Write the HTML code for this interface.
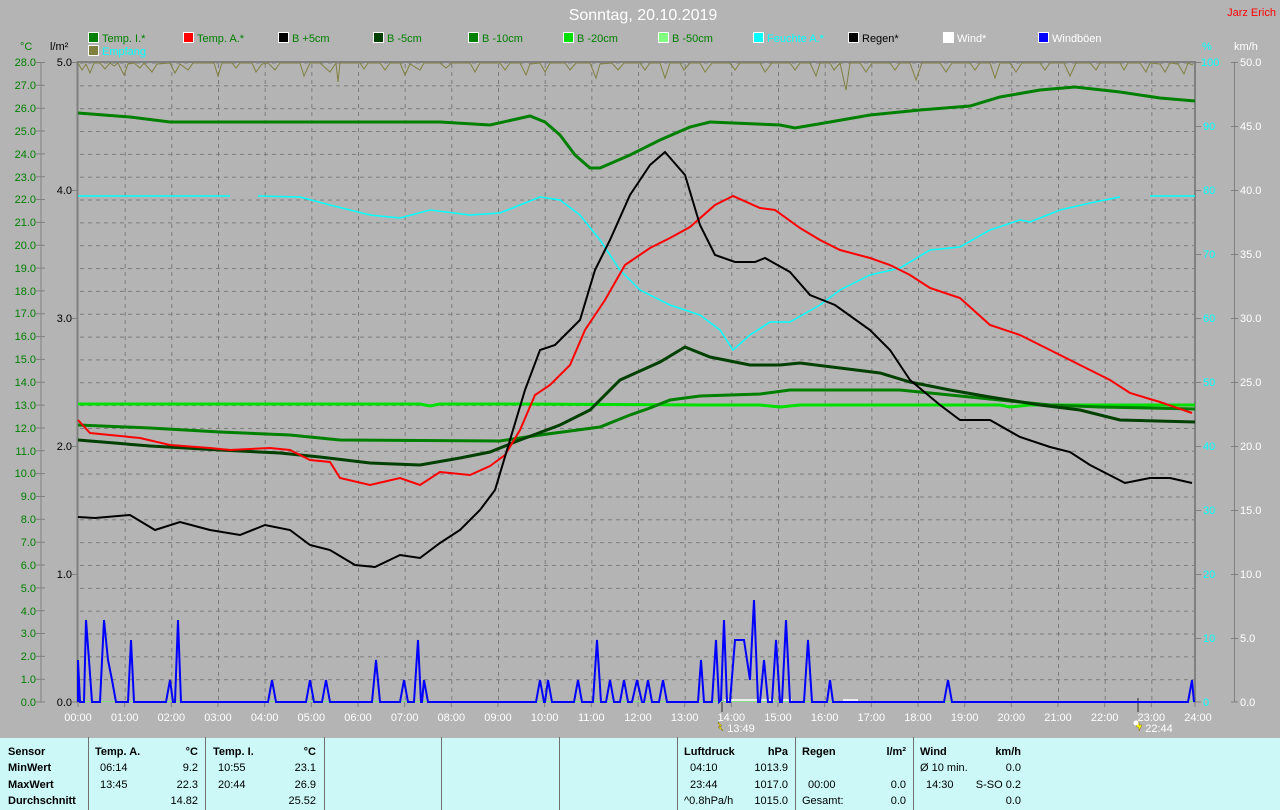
<!DOCTYPE html>
<html><head><meta charset="utf-8"><style>
html,body{margin:0;padding:0;background:#b4b4b4;width:1280px;height:810px;overflow:hidden}
svg{display:block}
.t{font-family:"Liberation Sans",sans-serif;font-size:11px}
</style></head><body>
<svg width="1280" height="810" viewBox="0 0 1280 810" xmlns="http://www.w3.org/2000/svg">
<defs>
<pattern id="gv" x="78" y="0" width="46.667" height="810" patternUnits="userSpaceOnUse"><line x1="0.5" y1="0" x2="0.5" y2="810" stroke="#7c7c7c" stroke-dasharray="4,4"/></pattern>
<pattern id="gh" x="0" y="62.5" width="1280" height="22.84" patternUnits="userSpaceOnUse"><line x1="0" y1="0.5" x2="1280" y2="0.5" stroke="#7c7c7c" stroke-dasharray="4,4"/></pattern>
</defs>
<rect width="1280" height="810" fill="#b4b4b4"/>
<rect x="79" y="63" width="1115" height="639" fill="url(#gv)"/>
<rect x="79" y="63" width="1115" height="639" fill="url(#gh)"/>
<!-- plot frame -->
<line x1="77.5" y1="61" x2="77.5" y2="703" stroke="#808080" stroke-width="2"/>
<line x1="77" y1="62" x2="1196" y2="62" stroke="#808080" stroke-width="2"/>
<line x1="1195" y1="61" x2="1195" y2="703" stroke="#808080" stroke-width="2"/>
<!-- left axes -->
<line x1="41" y1="62" x2="41" y2="702" stroke="#808080"/>
<line x1="1234.5" y1="62" x2="1234.5" y2="702" stroke="#808080"/>
<g class="t" fill="#008000" text-anchor="end">
<text x="36" y="66">28.0</text><text x="36" y="89">27.0</text><text x="36" y="112">26.0</text><text x="36" y="135">25.0</text><text x="36" y="158">24.0</text><text x="36" y="181">23.0</text><text x="36" y="203">22.0</text><text x="36" y="226">21.0</text><text x="36" y="249">20.0</text><text x="36" y="272">19.0</text><text x="36" y="295">18.0</text><text x="36" y="317">17.0</text><text x="36" y="340">16.0</text><text x="36" y="363">15.0</text><text x="36" y="386">14.0</text><text x="36" y="409">13.0</text><text x="36" y="432">12.0</text><text x="36" y="455">11.0</text><text x="36" y="477">10.0</text><text x="36" y="500">9.0</text><text x="36" y="523">8.0</text><text x="36" y="546">7.0</text><text x="36" y="569">6.0</text><text x="36" y="592">5.0</text><text x="36" y="615">4.0</text><text x="36" y="637">3.0</text><text x="36" y="660">2.0</text><text x="36" y="683">1.0</text><text x="36" y="706">0.0</text>
</g>
<g stroke="#808080">
<path d="M36 62.5h9M36 85.3h9M36 108.2h9M36 131h9M36 153.9h9M36 176.7h9M36 199.5h9M36 222.4h9M36 245.2h9M36 268.1h9M36 290.9h9M36 313.7h9M36 336.6h9M36 359.4h9M36 382.3h9M36 405.1h9M36 428h9M36 450.8h9M36 473.6h9M36 496.5h9M36 519.3h9M36 542.2h9M36 565h9M36 587.9h9M36 610.7h9M36 633.5h9M36 656.4h9M36 679.2h9M36 702h9"/>
<path d="M72 62.5h6M72 190.5h6M72 318.5h6M72 446.5h6M72 574.5h6M72 702h6"/>
<path d="M1195 62.5h6M1195 126.5h6M1195 190.5h6M1195 254.5h6M1195 318.5h6M1195 382.5h6M1195 446.5h6M1195 510.5h6M1195 574.5h6M1195 638.5h6M1195 702h6"/>
<path d="M1231 62.5h7M1231 126.5h7M1231 190.5h7M1231 254.5h7M1231 318.5h7M1231 382.5h7M1231 446.5h7M1231 510.5h7M1231 574.5h7M1231 638.5h7M1231 702h7"/>
<path d="M78 702v5M124.7 702v5M171.3 702v5M218 702v5M264.7 702v5M311.3 702v5M358 702v5M404.7 702v5M451.3 702v5M498 702v5M544.7 702v5M591.3 702v5M638 702v5M684.7 702v5M731.3 702v5M778 702v5M824.7 702v5M871.3 702v5M918 702v5M964.7 702v5M1011.3 702v5M1058 702v5M1104.7 702v5M1151.3 702v5M1195 702v5"/>
</g>
<g class="t" fill="#000" text-anchor="end">
<text x="72" y="66">5.0</text><text x="72" y="194">4.0</text><text x="72" y="322">3.0</text><text x="72" y="450">2.0</text><text x="72" y="578">1.0</text><text x="72" y="706">0.0</text>
</g>
<g class="t" fill="#00ffff">
<text x="1201" y="66">100</text><text x="1203" y="130">90</text><text x="1203" y="194">80</text><text x="1203" y="258">70</text><text x="1203" y="322">60</text><text x="1203" y="386">50</text><text x="1203" y="450">40</text><text x="1203" y="514">30</text><text x="1203" y="578">20</text><text x="1203" y="642">10</text><text x="1203" y="706">0</text>
</g>
<g class="t" fill="#fff">
<text x="1240" y="66">50.0</text><text x="1240" y="130">45.0</text><text x="1240" y="194">40.0</text><text x="1240" y="258">35.0</text><text x="1240" y="322">30.0</text><text x="1240" y="386">25.0</text><text x="1240" y="450">20.0</text><text x="1240" y="514">15.0</text><text x="1240" y="578">10.0</text><text x="1240" y="642">5.0</text><text x="1240" y="706">0.0</text>
</g>
<!-- x labels -->
<g class="t" fill="#fff" text-anchor="middle">
<text x="78" y="721">00:00</text><text x="124.7" y="721">01:00</text><text x="171.3" y="721">02:00</text><text x="218" y="721">03:00</text><text x="264.7" y="721">04:00</text><text x="311.3" y="721">05:00</text><text x="358" y="721">06:00</text><text x="404.7" y="721">07:00</text><text x="451.3" y="721">08:00</text><text x="498" y="721">09:00</text><text x="544.7" y="721">10:00</text><text x="591.3" y="721">11:00</text><text x="638" y="721">12:00</text><text x="684.7" y="721">13:00</text><text x="731.3" y="721">14:00</text><text x="778" y="721">15:00</text><text x="824.7" y="721">16:00</text><text x="871.3" y="721">17:00</text><text x="918" y="721">18:00</text><text x="964.7" y="721">19:00</text><text x="1011.3" y="721">20:00</text><text x="1058" y="721">21:00</text><text x="1104.7" y="721">22:00</text><text x="1151.3" y="721">23:00</text><text x="1198" y="721">24:00</text>
<text x="741" y="732">13:49</text><text x="1159" y="732">22:44</text>
</g>
<line x1="722" y1="702" x2="722" y2="712" stroke="#707070" stroke-width="2"/>
<line x1="1138" y1="698" x2="1138" y2="712" stroke="#707070" stroke-width="2"/>
<path d="M718 722l4 4-2 0 3 5-5-4 2 0z" fill="#ffff00" stroke="#806000" stroke-width="0.5"/>
<path d="M1136 726l3-4v3l3 0-3 6v-3z" fill="#ffff00" stroke="#806000" stroke-width="0.5"/>
<circle cx="1136" cy="723" r="2.5" fill="#fff"/>
<!-- title/legend -->
<text x="643" y="20" font-family="Liberation Sans,sans-serif" font-size="16" fill="#fff" text-anchor="middle">Sonntag, 20.10.2019</text>
<text x="1276" y="16" class="t" fill="#ff0000" text-anchor="end">Jarz Erich</text>
<g stroke="#fff" stroke-width="1">
<rect x="88.5" y="32.5" width="10" height="10" fill="#008000"/>
<rect x="183.5" y="32.5" width="10" height="10" fill="#ff0000"/>
<rect x="278.5" y="32.5" width="10" height="10" fill="#000"/>
<rect x="373.5" y="32.5" width="10" height="10" fill="#004000"/>
<rect x="468.5" y="32.5" width="10" height="10" fill="#008000"/>
<rect x="563.5" y="32.5" width="10" height="10" fill="#00e000"/>
<rect x="658.5" y="32.5" width="10" height="10" fill="#80ff80"/>
<rect x="753.5" y="32.5" width="10" height="10" fill="#00ffff"/>
<rect x="848.5" y="32.5" width="10" height="10" fill="#000"/>
<rect x="943.5" y="32.5" width="10" height="10" fill="#fff"/>
<rect x="1038.5" y="32.5" width="10" height="10" fill="#0000ff"/>
<rect x="88.5" y="45.5" width="10" height="10" fill="#808040"/>
</g>
<g class="t">
<text x="102" y="42" fill="#008000">Temp. I.*</text>
<text x="197" y="42" fill="#008000">Temp. A.*</text>
<text x="292" y="42" fill="#008000">B +5cm</text>
<text x="387" y="42" fill="#008000">B -5cm</text>
<text x="482" y="42" fill="#008000">B -10cm</text>
<text x="577" y="42" fill="#008000">B -20cm</text>
<text x="672" y="42" fill="#008000">B -50cm</text>
<text x="767" y="42" fill="#00ffff">Feuchte A.*</text>
<text x="862" y="42" fill="#000">Regen*</text>
<text x="957" y="42" fill="#fff">Wind*</text>
<text x="1052" y="42" fill="#fff">Windböen</text>
<text x="102" y="55" fill="#00ffff">Empfang</text>
<text x="20" y="50" fill="#008000">°C</text>
<text x="50" y="50" fill="#000">l/m²</text>
<text x="1202" y="50" fill="#00ffff">%</text>
<text x="1234" y="50" fill="#fff">km/h</text>
</g>
<!-- baseline -->
<line x1="78" y1="701.5" x2="1195" y2="701.5" stroke="#80e080" stroke-width="1"/>
<path d="M724 700h50M782 700h10M843 700h15" stroke="#fff" stroke-width="1.5"/>
<!-- Empfang -->
<polyline fill="none" stroke="#808040" stroke-width="1" points="78,63 82,70 86,64 90,73 94,63 100,63 105,69 110,63 114,66 118,63 124,75 128,64 134,63 140,68 144,63 152,72 157,64 170,63 175,73 180,64 188,70 193,63 214,63 218,76 222,63 232,63 236,68 240,63 252,63 256,72 262,64 268,63 275,70 280,63 300,63 304,76 310,63 320,63 330,72 336,63 338,82 340,63 360,63 364,69 368,63 380,63 385,70 390,63 400,63 405,75 410,64 420,70 424,63 440,63 446,68 452,63 470,63 475,72 480,63 500,63 505,70 510,63 520,63 526,75 530,64 540,63 545,72 550,63 565,63 570,70 576,63 590,63 596,78 600,64 612,63 618,70 624,63 640,63 645,70 650,63 660,63 665,78 670,63 680,63 684,70 690,63 700,63 705,72 712,63 730,63 735,70 740,63 760,63 765,72 772,63 790,63 795,70 800,63 810,63 816,76 820,63 830,63 834,70 840,63 846,90 850,63 860,63 866,72 872,63 890,63 895,70 900,63 910,63 916,80 922,63 940,63 946,72 952,63 970,63 975,70 980,63 990,63 995,78 1000,63 1010,63 1016,72 1022,63 1040,63 1045,70 1050,63 1064,63 1070,76 1076,63 1090,63 1096,70 1100,63 1120,63 1124,70 1128,63 1140,63 1146,72 1150,63 1160,64 1165,72 1170,63 1178,64 1184,74 1188,63 1193,65"/>
<!-- Feuchte -->
<g fill="none" stroke="#00ffff" stroke-width="1.5">
<polyline points="78,196 230,196"/>
<polyline points="258,196 300,197 330,205 370,215 400,218 430,210 470,215 500,213 520,205 540,197 560,200 580,215 600,240 620,270 640,290 670,305 700,315 720,330 733,350 750,335 770,322 790,322 820,305 840,290 870,275 900,268 930,250 960,247 990,230 1020,220 1030,222 1060,210 1090,203 1120,197"/>
<polyline points="1150,196 1195,196"/>
</g>
<!-- B -20cm -->
<polyline fill="none" stroke="#00e000" stroke-width="3" points="78,404 420,404 430,406 440,404 520,404 700,405 760,405 780,407 800,405 1000,405 1010,407 1030,405 1195,405"/>
<!-- B -10cm -->
<polyline fill="none" stroke="#008000" stroke-width="3" points="78,425 150,428 220,432 290,435 340,440 500,441 540,435 600,427 630,415 650,408 670,400 700,396 760,394 790,390 900,390 950,395 1000,400 1050,405 1100,407 1195,409"/>
<!-- B -5cm -->
<polyline fill="none" stroke="#004000" stroke-width="3" points="78,440 150,446 220,450 280,453 320,457 370,463 420,465 460,458 490,452 520,440 560,425 590,410 620,380 660,362 685,347 710,357 750,365 780,365 800,363 840,368 880,373 910,382 950,390 990,397 1040,405 1080,410 1120,420 1195,422"/>
<!-- Temp I -->
<polyline fill="none" stroke="#008000" stroke-width="3" points="78,113 130,117 170,122 290,122 440,122 490,125 530,116 545,122 560,135 575,155 590,168 600,168 630,155 660,140 690,127 710,122 780,125 795,128 830,122 870,115 920,110 970,106 1000,97 1040,90 1075,87 1120,92 1160,98 1195,101"/>
<!-- Temp A -->
<polyline fill="none" stroke="#ff0000" stroke-width="2" points="78,420 90,433 110,435 140,438 170,445 210,448 230,450 270,448 290,450 310,460 330,462 340,478 370,485 400,478 420,485 440,472 470,475 490,466 505,455 520,430 535,395 550,385 570,365 585,330 605,300 625,265 650,248 670,238 690,227 715,205 733,196 760,208 775,210 800,228 820,240 840,250 870,258 890,265 910,275 930,288 960,298 990,325 1020,335 1050,350 1080,365 1110,380 1130,393 1160,402 1192,413"/>
<!-- B +5cm -->
<polyline fill="none" stroke="#000" stroke-width="2" points="78,517 95,518 130,515 155,530 180,522 210,530 240,535 265,525 290,530 310,545 330,550 355,565 375,567 400,555 420,558 440,543 460,530 480,510 495,490 510,440 525,390 540,350 555,345 570,330 580,320 595,270 610,240 630,195 650,165 665,152 685,175 700,225 715,255 735,262 755,262 765,258 790,272 810,295 835,305 870,330 890,350 910,380 940,405 960,420 990,420 1020,437 1050,447 1070,452 1090,465 1125,483 1150,478 1170,478 1192,483"/>
<!-- Windböen -->
<polyline fill="none" stroke="#0000ff" stroke-width="2" points="78,702 78,660 80,702 84,702 86,620 89,660 92,702 100,702 104,620 108,660 112,680 116,702 128,702 131,640 134,702 166,702 170,680 173,702 175,702 178,620 181,702 268,702 272,680 276,702 306,702 310,680 314,702 322,702 326,680 330,702 372,702 376,660 380,702 400,702 404,680 408,702 414,702 418,640 421,702 422,702 424,680 428,702 536,702 540,680 544,702 545,702 548,680 552,702 574,702 578,680 582,702 593,702 597,640 601,702 606,702 610,680 614,702 620,702 624,680 628,702 632,702 637,680 642,702 644,702 648,680 652,702 659,702 663,680 667,702 698,702 701,660 704,702 712,702 716,640 719,702 721,700 724,620 727,702 730,702 735,640 744,640 750,680 754,600 758,702 760,702 764,660 768,702 772,702 776,640 780,702 782,702 786,620 790,702 804,702 808,640 812,702 827,702 830,680 833,702 944,702 948,680 952,702 1188,702 1192,680 1194,702"/>
<!-- table -->
<rect x="0" y="737" width="1280" height="73" fill="#ccf8f8"/>
<line x1="0" y1="737.5" x2="1280" y2="737.5" stroke="#b4b4b4"/>
<g stroke="#707070" stroke-width="1">
<path d="M88.5 737v73M205.5 737v73M324.5 737v73M441.5 737v73M559.5 737v73M677.5 737v73M795.5 737v73M913.5 737v73"/>
</g>
<g class="t" fill="#000">
<g font-weight="bold">
<text x="8" y="755">Sensor</text><text x="8" y="771">MinWert</text><text x="8" y="788">MaxWert</text><text x="8" y="804">Durchschnitt</text>
<text x="95" y="755">Temp. A.</text><text x="198" y="755" text-anchor="end">°C</text>
<text x="213" y="755">Temp. I.</text><text x="316" y="755" text-anchor="end">°C</text>
<text x="684" y="755">Luftdruck</text><text x="788" y="755" text-anchor="end">hPa</text>
<text x="802" y="755">Regen</text><text x="906" y="755" text-anchor="end">l/m²</text>
<text x="920" y="755">Wind</text><text x="1021" y="755" text-anchor="end">km/h</text>
</g>
<text x="100" y="771">06:14</text><text x="198" y="771" text-anchor="end">9.2</text>
<text x="100" y="788">13:45</text><text x="198" y="788" text-anchor="end">22.3</text>
<text x="198" y="804" text-anchor="end">14.82</text>
<text x="218" y="771">10:55</text><text x="316" y="771" text-anchor="end">23.1</text>
<text x="218" y="788">20:44</text><text x="316" y="788" text-anchor="end">26.9</text>
<text x="316" y="804" text-anchor="end">25.52</text>
<text x="690" y="771">04:10</text><text x="788" y="771" text-anchor="end">1013.9</text>
<text x="690" y="788">23:44</text><text x="788" y="788" text-anchor="end">1017.0</text>
<text x="684" y="804">^0.8hPa/h</text><text x="788" y="804" text-anchor="end">1015.0</text>
<text x="808" y="788">00:00</text><text x="906" y="788" text-anchor="end">0.0</text>
<text x="802" y="804">Gesamt:</text><text x="906" y="804" text-anchor="end">0.0</text>
<text x="920" y="771">Ø 10 min.</text><text x="1021" y="771" text-anchor="end">0.0</text>
<text x="926" y="788">14:30</text><text x="1021" y="788" text-anchor="end">S-SO 0.2</text>
<text x="1021" y="804" text-anchor="end">0.0</text>
</g>
</svg>
</body></html>
